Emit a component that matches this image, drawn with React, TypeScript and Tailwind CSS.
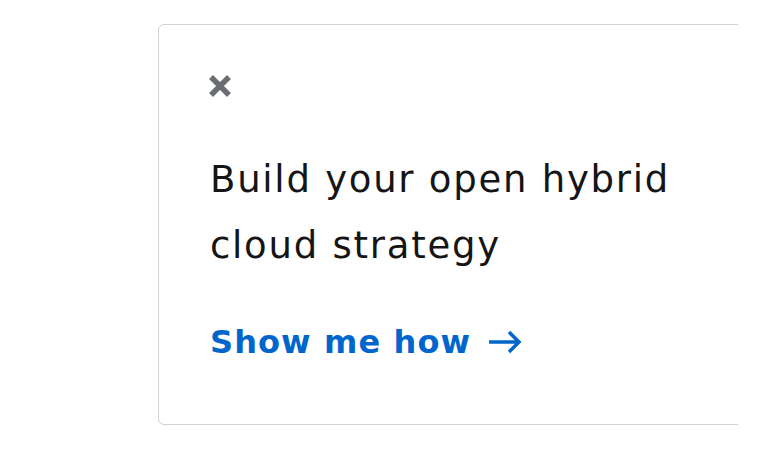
import React from "react";

export default function App() {
  return (
    <div className="w-[765px] h-[450px] bg-white overflow-hidden" style={{ fontFamily: "'DejaVu Sans', 'Noto Sans', sans-serif" }}>
      <div className="w-[738px] pt-[24px] pl-[158px] overflow-hidden">
        <div className="w-[640px] h-[401px] border border-[#d2d2d2] rounded-[6px] pl-[49px] pt-[49px] bg-white">
          <button className="block w-[24px] h-[24px] text-[#6a6e73]" aria-label="Close">
            <svg viewBox="0 0 24 24" width="24" height="24">
              <path d="M3 3 L21 21 M21 3 L3 21" stroke="currentColor" strokeWidth="5.5" strokeLinecap="butt" />
            </svg>
          </button>
          <h2 className="ml-[2px] mt-[49px] w-[540px] text-[37px] leading-[66px] text-[#151515] font-normal tracking-[1.75px]">
            Build your open hybrid<br />cloud strategy
          </h2>
          <a href="#" className="ml-[2px] mt-[43px] flex items-center gap-[17px] text-[#0066cc] font-bold text-[32px] leading-[40px] tracking-[1.1px]">
            <span>Show me how</span>
            <svg viewBox="0 0 34 24" width="34" height="24">
              <path d="M1 12 H31 M21 2 L31 12 L21 22" stroke="currentColor" strokeWidth="3.5" fill="none" />
            </svg>
          </a>
        </div>
      </div>
    </div>
  );
}
